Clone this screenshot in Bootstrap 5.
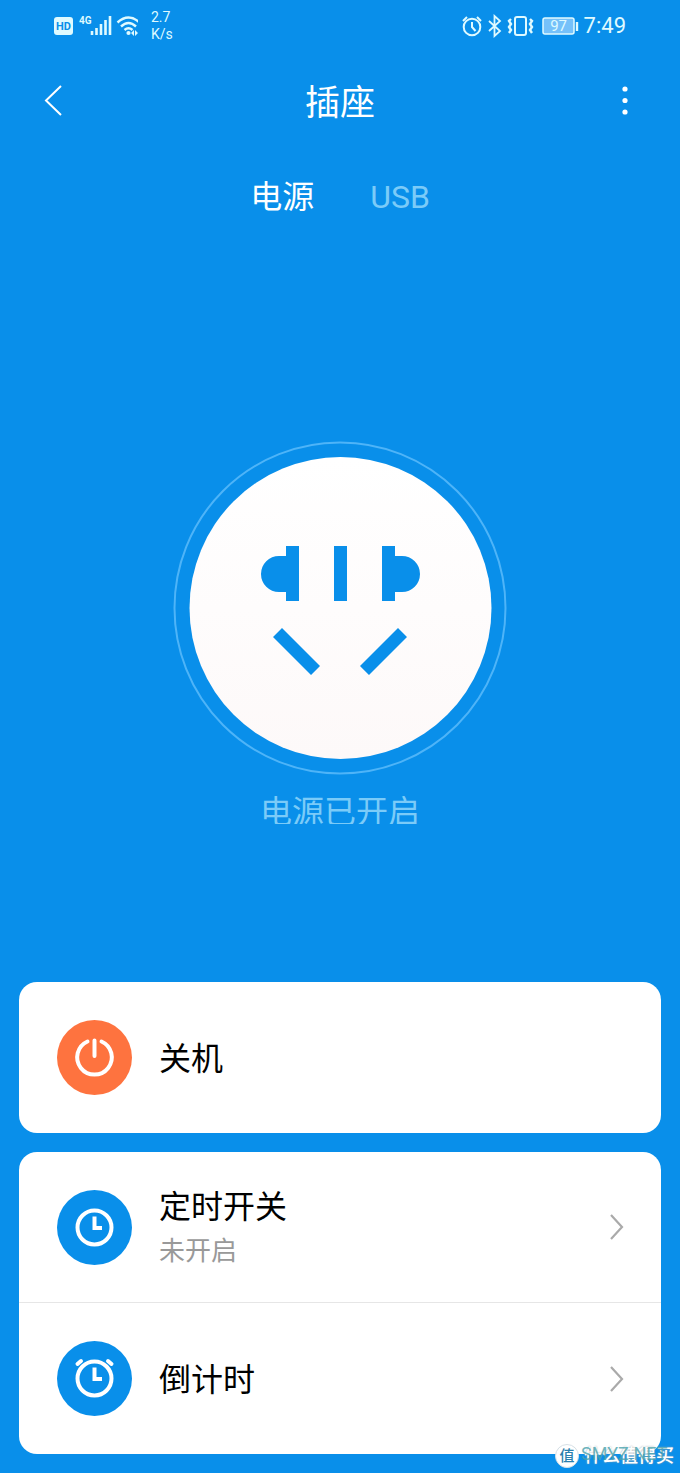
<!DOCTYPE html>
<html lang="zh-CN">
<head>
<meta charset="utf-8">
<meta name="viewport" content="width=device-width, initial-scale=1">
<title>插座</title>
<link href="https://cdn.jsdelivr.net/npm/bootstrap@5.3.0/dist/css/bootstrap.min.css" rel="stylesheet">
<style>
  :root { --sky: #098fea; --ice: #dffaff; --pale: #7bcbf8; }
  body { background: var(--sky); color: #fff; font-family: Roboto, "Noto Sans CJK SC", sans-serif; }
  svg { display: block; flex: none; }
  .status-bar { height: 52px; padding: 0 54px; color: var(--ice); }
  .net-speed { font-size: 14px; line-height: 17px; margin-left: 13px; }
  .clock { font-size: 22px; line-height: 28px; }
  .battery-level { width: 38px; height: 18px; }
  .battery-level span { font-size: 15px; line-height: 18px; }
  .title-bar { height: 98px; padding: 0 40px; }
  .title-bar h1 { font-size: 35px; line-height: 48px; font-weight: 400; padding-top: 5px; }
  .bare { background: none; border: 0; padding: 0; color: inherit; }
  .title-bar .bare { width: 30px; }
  .source-tabs { gap: 56px; }
  .source-tabs .bare { font-size: 32px; line-height: 48px; padding-top: 23px; color: var(--pale); }
  .source-tabs .bare.active { color: #fff; }
  .stage { padding: 220px 0 158px; }
  .state-text { font-size: 32px; line-height: 32px; height: 28px; margin: 21px 0 0; color: var(--pale); overflow: hidden; }
  .panels { padding: 0 19px 19px; gap: 19px; }
  .panel { background: #fff; border-radius: 18px; overflow: hidden; }
  .panel-row { min-height: 151px; padding: 0 36px 0 38px; gap: 27px; color: #000; width: 100%; text-align: left; }
  .panel-row:not(:last-child) { border-bottom: 1px solid #e6e6e6; }
  .row-title { font-size: 32px; line-height: 44px; display: block; padding-top: 3px; }
  .row-note { font-size: 26px; line-height: 44px; color: #999; display: block; }
  .watermark { right: 6px; bottom: 1px; gap: 5px; }
  .wm-text { font-size: 18px; line-height: 32px; font-weight: 500; color: #fff; text-shadow: 0 0 2px #9aa6ad; }
  .wm-site { left: 26px; top: 0; font-size: 18px; line-height: 28px; color: #4aa3ad; opacity: .8; }
</style>
</head>
<body>
<div class="position-relative min-vh-100 d-flex flex-column">
  <div class="status-bar d-flex align-items-center justify-content-between">
    <div class="d-flex align-items-center">
      <svg width="84" height="28" viewBox="0 0 84 28" role="img" aria-label="HD 4G">
        <rect x="0" y="5" width="19" height="18" rx="3" fill="#dffaff"/>
        <text x="9.500" y="18" text-anchor="middle" font-size="11" font-weight="700" fill="#098fea">HD</text>
        <text x="25" y="12" font-size="10" font-weight="700" fill="#dffaff">4G</text>
        <path d="M38 23v-4M42.500 23v-7M47 23V12M51.500 23V8M56 23V4" stroke="#dffaff" stroke-width="2.600"/>
        <g fill="none" stroke="#dffaff" stroke-width="2.400"><path d="M63.500 10.500q11-10 22 0M67 14.500q7.500-7 15 0M70.500 18q4-3.500 8 0"/></g>
        <circle cx="74.500" cy="21" r="2.100" fill="#dffaff"/>
        <path d="M77 21l3-3v6zM84 21l-3-3v6z" fill="#dffaff"/>
      </svg>
      <div class="net-speed">2.7<br>K/s</div>
    </div>
    <div class="d-flex align-items-center">
      <svg width="78" height="24" viewBox="0 0 78 24" fill="none" stroke="#dffaff" stroke-width="2" role="img" aria-label="闹钟 蓝牙 振动">
        <circle cx="12" cy="13" r="8.300"/><path d="M12 8v5l3.500 4M3 7l4-4M17 3l4 4"/>
        <path d="M29 7l11 10-5.500 5V2L40 7 29 17" stroke-width="1.800"/>
        <rect x="55" y="3" width="11" height="18" rx="2"/>
        <path d="M51 5l-2 2 2 3-2 3 2 3-2 3M70 5l2 2-2 3 2 3-2 3 2 3" stroke-width="2.400"/>
      </svg>
      <div class="battery-level position-relative ms-1">
        <svg width="38" height="18" viewBox="0 0 38 18"><rect x="1" y="1" width="31" height="16" rx="2" fill="#75c1fa" stroke="#dffaff" stroke-width="1.500"/><path d="M35 5v9" stroke="#dffaff" stroke-width="2.400"/></svg>
        <span class="position-absolute top-0 start-0 text-center pe-1 w-100">97</span>
      </div>
      <span class="clock ms-1">7:49</span>
    </div>
  </div>

  <header class="title-bar d-flex align-items-center justify-content-between">
    <button class="bare" type="button" aria-label="返回"><svg width="26" height="34" viewBox="0 0 26 34" fill="none" stroke="#fff" stroke-width="2"><path d="M21 2L6 16.500 21 31"/></svg></button>
    <h1 class="m-0">插座</h1>
    <button class="bare" type="button" aria-label="更多"><svg width="30" height="34" viewBox="0 0 30 34" fill="#fff"><circle cx="15" cy="5" r="2.600"/><circle cx="15" cy="16.500" r="2.600"/><circle cx="15" cy="28" r="2.600"/></svg></button>
  </header>

  <nav class="source-tabs d-flex justify-content-center">
    <button class="bare active" type="button">电源</button>
    <button class="bare" type="button">USB</button>
  </nav>

  <main class="stage flex-grow-1 d-flex flex-column align-items-center">
    <button class="bare" type="button" aria-label="电源开关">
      <svg width="334" height="334" viewBox="0 0 334 334">
        <defs><linearGradient id="face" x2="0" y2="1"><stop offset="0" stop-color="#fff"/><stop offset="1" stop-color="#fdf9f9"/></linearGradient></defs>
        <circle cx="167" cy="167" r="165.500" fill="none" stroke="#4eb4f8" stroke-width="2"/>
        <circle cx="167.500" cy="167" r="151" fill="url(#face)"/>
        <g fill="#098fea">
          <path d="M113 105h13v55h-13v-9h-7a18 18 0 0 1 0-36h7zM161 105h13v55h-13zM209 105h13v10h7a18 18 0 0 1 0 36h-7v9h-13z"/>
          <path d="M100 196l9-9 38 38-9 9zM187 225l38-38 9 9-38 38z"/>
        </g>
      </svg>
    </button>
    <p class="state-text">电源已开启</p>
  </main>

  <div class="panels d-flex flex-column">
    <section class="panel">
      <button class="bare panel-row d-flex align-items-center" type="button">
        <svg width="75" height="75" viewBox="0 0 75 75"><circle cx="37.500" cy="37.500" r="37.500" fill="#fe733f"/><g fill="none" stroke="#fff" stroke-width="4" stroke-linecap="round"><path d="M30.500 21.500a17.300 17.300 0 1 0 14 0M37.500 20.500V36"/></g></svg>
        <span class="row-title">关机</span>
      </button>
    </section>
    <section class="panel">
      <button class="bare panel-row d-flex align-items-center" type="button">
        <svg width="75" height="75" viewBox="0 0 75 75"><circle cx="37.500" cy="37.500" r="37.500" fill="#098fea"/><g fill="none" stroke="#fff" stroke-width="4"><circle cx="37.500" cy="37.500" r="17"/><path d="M37.500 26.500v11.500H45"/></g></svg>
        <span class="flex-grow-1"><span class="row-title">定时开关</span><span class="row-note">未开启</span></span>
        <svg width="18" height="28" viewBox="0 0 18 28" fill="none" stroke="#aaa" stroke-width="2.200"><path d="M4 2l11 12L4 26"/></svg>
      </button>
      <button class="bare panel-row d-flex align-items-center" type="button">
        <svg width="75" height="75" viewBox="0 0 75 75"><circle cx="37.500" cy="37.500" r="37.500" fill="#098fea"/><g fill="none" stroke="#fff" stroke-width="4"><circle cx="37.500" cy="37.500" r="17"/><path d="M37.500 26.500v11.500H45"/><path d="M20.500 23l3.500-3M54.500 23L51 20" stroke-linecap="round"/></g></svg>
        <span class="row-title flex-grow-1">倒计时</span>
        <svg width="18" height="28" viewBox="0 0 18 28" fill="none" stroke="#aaa" stroke-width="2.200"><path d="M4 2l11 12L4 26"/></svg>
      </button>
    </section>
  </div>

  <div class="watermark position-absolute d-flex align-items-center">
    <svg width="24" height="24" viewBox="0 0 24 24" aria-hidden="true"><circle cx="12" cy="12" r="11.500" fill="#fff" stroke="#d5dfe5"/><text x="12" y="17" text-anchor="middle" font-size="15" font-weight="500" fill="#2a7fae">值</text></svg>
    <span class="wm-text">什么值得买</span>
    <span class="wm-site position-absolute">SMYZ.NET</span>
  </div>
</div>
<script src="https://cdn.jsdelivr.net/npm/bootstrap@5.3.0/dist/js/bootstrap.bundle.min.js"></script>
</body>
</html>
